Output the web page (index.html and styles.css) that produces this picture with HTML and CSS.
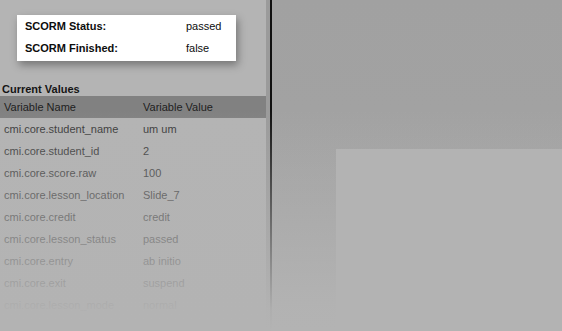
FILE: index.html
```html
<!DOCTYPE html>
<html>
<head>
<meta charset="utf-8">
<link rel="stylesheet" href="styles.css">
</head>
<body>
<div class="page">
  <aside class="panel">
    <div class="card">
      <div class="card-row"><span class="card-label">SCORM Status:</span><span class="card-value">passed</span></div>
      <div class="card-row"><span class="card-label">SCORM Finished:</span><span class="card-value">false</span></div>
    </div>
    <h2 class="section-title">Current Values</h2>
    <div class="table">
      <div class="row head"><span class="c1">Variable Name</span><span class="c2">Variable Value</span></div>
      <div class="row"><span class="c1">cmi.core.student_name</span><span class="c2">um um</span></div>
      <div class="row"><span class="c1">cmi.core.student_id</span><span class="c2">2</span></div>
      <div class="row"><span class="c1">cmi.core.score.raw</span><span class="c2">100</span></div>
      <div class="row"><span class="c1">cmi.core.lesson_location</span><span class="c2">Slide_7</span></div>
      <div class="row"><span class="c1">cmi.core.credit</span><span class="c2">credit</span></div>
      <div class="row"><span class="c1">cmi.core.lesson_status</span><span class="c2">passed</span></div>
      <div class="row"><span class="c1">cmi.core.entry</span><span class="c2">ab initio</span></div>
      <div class="row"><span class="c1">cmi.core.exit</span><span class="c2">suspend</span></div>
      <div class="row"><span class="c1">cmi.core.lesson_mode</span><span class="c2">normal</span></div>
    </div>
  </aside>
  <div class="track"></div>
  <div class="rule"></div>
  <main class="stage">
    <div class="slide"></div>
  </main>
  <div class="fade"></div>
</div>
</body>
</html>
```
FILE: styles.css
```css
html, body {
  margin: 0;
  padding: 0;
  height: 100%;
  overflow: hidden;
}
body {
  font-family: "Liberation Sans", Arial, sans-serif;
  font-size: 11px;
  background: #b3b3b3;
}
.page {
  position: relative;
  display: flex;
  height: 331px;
}
.panel {
  width: 266px;
  flex: none;
  background: #b4b4b4;
  display: flex;
  flex-direction: column;
}
.card {
  margin: 15px 0 0 17px;
  width: 219px;
  box-sizing: border-box;
  padding: 0 0 2px 8px;
  background: #ffffff;
  box-shadow: 2px 4px 8px rgba(0, 0, 0, 0.35);
}
.card-row {
  display: flex;
  height: 22px;
  align-items: center;
  color: #0d0d0d;
}
.card-label {
  width: 161px;
  font-weight: bold;
}
.section-title {
  margin: 21px 0 0 2px;
  font-size: 11px;
  font-weight: bold;
  line-height: 14px;
  color: #141414;
}
.row {
  display: flex;
  height: 22px;
  align-items: center;
  color: #363636;
}
.row.head {
  background: #818181;
  color: #1e1e1e;
}
.c1 {
  width: 139px;
  padding-left: 4px;
}
.track {
  width: 4px;
  flex: none;
  background: #9b9b9b;
}
.rule {
  width: 2px;
  flex: none;
  background: #111111;
}
.stage {
  flex: 1;
  background: linear-gradient(to bottom, #a1a1a1, #a4a4a4);
  display: flex;
  flex-direction: column;
}
.slide {
  margin: 149px 0 0 64px;
  flex: 1;
  background: #b3b3b3;
}
.fade {
  position: absolute;
  left: 0;
  right: 0;
  top: 110px;
  bottom: 0;
  pointer-events: none;
  background: linear-gradient(to bottom, rgba(179, 179, 179, 0) 0%, rgba(179, 179, 179, 0.6) 55%, rgba(179, 179, 179, 0.97) 90%, rgba(179, 179, 179, 1) 100%);
}
```
